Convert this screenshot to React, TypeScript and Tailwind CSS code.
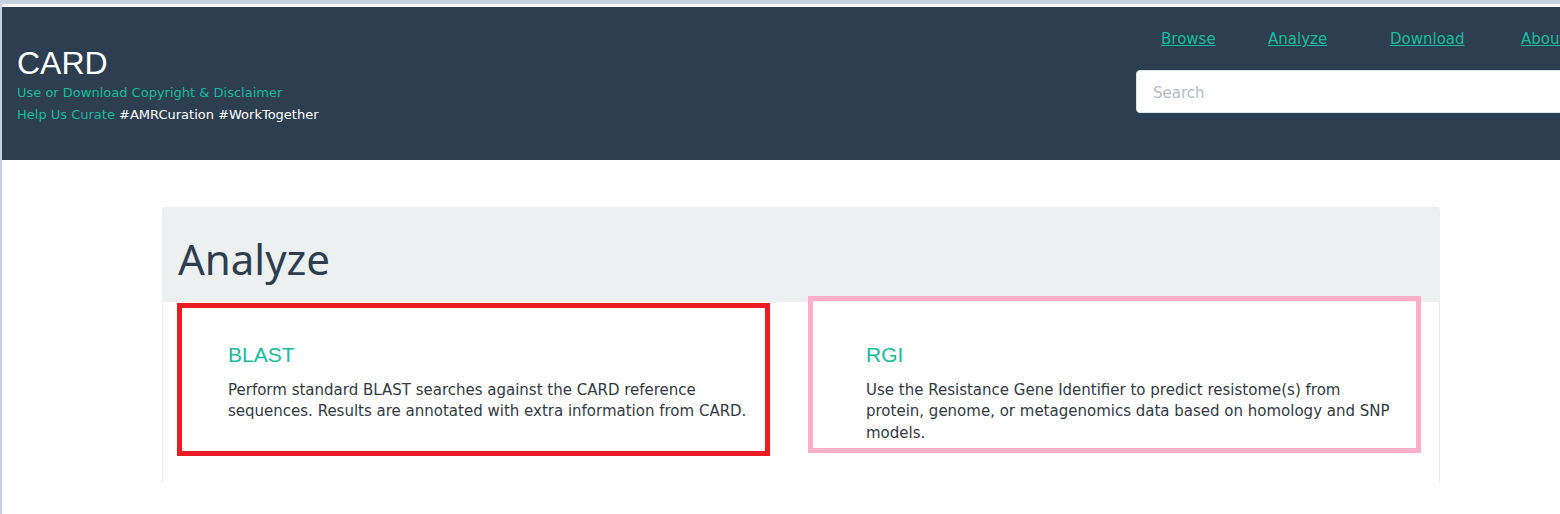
import React from "react";

export default function App() {
  return (
    <div className="relative w-[1560px] h-[514px] overflow-hidden bg-[#c8d1e2] pl-[2px] pt-[4px] font-['DejaVu_Sans',Verdana,sans-serif]">
      <div className="h-full bg-white pt-[3px]">
        <header className="flex h-[153px] bg-[#2c3e50]">
          <div className="flex-1 pl-[15px] pt-[38px]">
            <div className="font-['Liberation_Sans',Arial,sans-serif] text-[32px] leading-[36px] text-white">
              CARD
            </div>
            <div className="pt-[1px] text-[13px] leading-[22px]">
              <div>
                <a className="text-[#18bc9c]">Use or Download Copyright &amp; Disclaimer</a>
              </div>
              <div>
                <a className="text-[#18bc9c]">Help Us Curate</a>{" "}
                <span className="text-white">#AMRCuration #WorkTogether</span>
              </div>
            </div>
          </div>
          <div className="w-[424px] shrink-0 pt-[22px]">
            <nav className="flex pl-[25px] text-[15px] leading-[20px]">
              <div className="w-[107px] shrink-0">
                <a className="text-[#18bc9c] underline">Browse</a>
              </div>
              <div className="w-[122px] shrink-0">
                <a className="text-[#18bc9c] underline">Analyze</a>
              </div>
              <div className="w-[131px] shrink-0">
                <a className="text-[#18bc9c] underline">Download</a>
              </div>
              <div className="w-[80px] shrink-0 whitespace-nowrap">
                <a className="text-[#18bc9c] underline">About</a>
              </div>
            </nav>
            <div className="mt-[21px] flex h-[43px] w-[500px] items-center rounded-[4px] border border-[#dce4ec] bg-white pl-[16px] pt-[4px]">
              <span className="text-[15px] text-[#b3bbc4]">Search</span>
            </div>
          </div>
        </header>

        <div className="ml-[160px] mt-[47px] w-[1278px]">
          <div className="h-[95px] rounded-t-[4px] bg-[#ecf0f1] pl-[16px] pt-[29px]">
            <h1 className="font-['Noto_Sans','Open_Sans',sans-serif] text-[42px] leading-[46px] text-[#2c3e50]">
              Analyze
            </h1>
          </div>
          <div className="grid h-[180px] grid-cols-2 border-x border-[#eeeeee]">
            <div className="pl-[65px] pr-[41px] pt-[41px]">
              <h4 className="font-['Liberation_Sans',Arial,sans-serif] text-[21px] leading-[23px] text-[#18bc9c]">
                BLAST
              </h4>
              <p className="mt-[14px] text-[15px] leading-[21.4px] text-[#323a44]">
                Perform standard BLAST searches against the CARD reference sequences. Results are annotated with extra information from CARD.
              </p>
            </div>
            <div className="pl-[65px] pr-[41px] pt-[41px]">
              <h4 className="font-['Liberation_Sans',Arial,sans-serif] text-[21px] leading-[23px] text-[#18bc9c]">
                RGI
              </h4>
              <p className="mt-[14px] text-[15px] leading-[21.4px] text-[#323a44]">
                Use the Resistance Gene Identifier to predict resistome(s) from protein, genome, or metagenomics data based on homology and SNP models.
              </p>
            </div>
          </div>
        </div>
      </div>

      <div className="absolute left-[177px] top-[303px] h-[153px] w-[593px] border-[5px] border-[#ed1c24]" />
      <div className="absolute left-[808px] top-[296px] h-[157px] w-[613px] border-[5px] border-[#ffaec9]" />
    </div>
  );
}
